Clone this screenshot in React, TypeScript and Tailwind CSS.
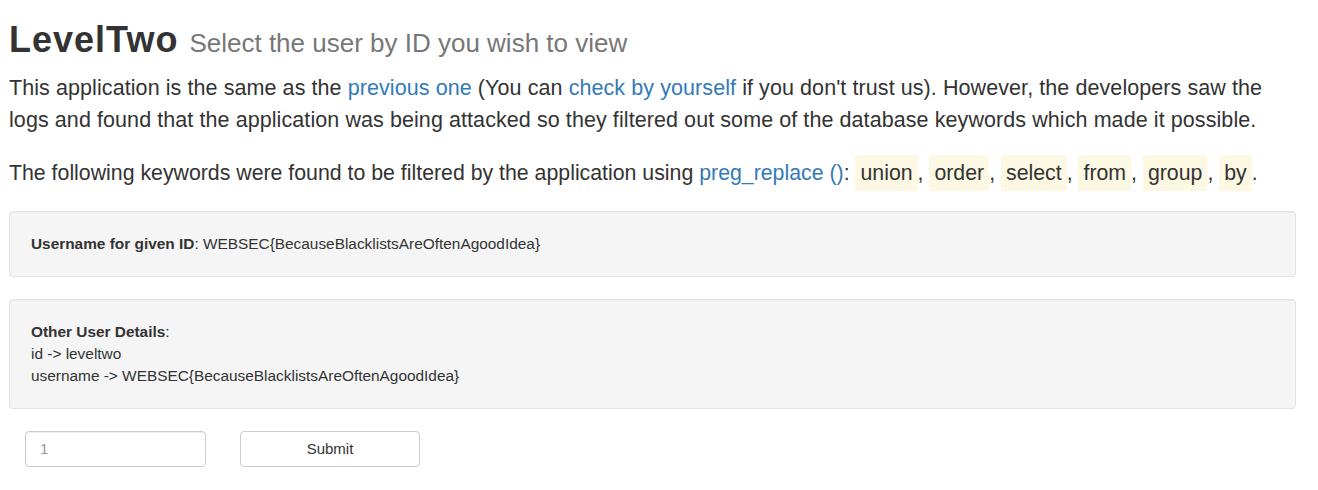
export default function App() {
  const keywords = ["union", "order", "select", "from", "group", "by"];
  return (
    <div className="min-h-screen bg-white pl-[9px] pr-[22px] pt-[20px] font-['Liberation_Sans',Arial,sans-serif] text-[#333]">
      <h1 className="mb-[12px] text-[36px] font-bold leading-[1.1] tracking-[1px] text-[#333]">
        LevelTwo{" "}
        <small className="text-[26px] font-normal tracking-normal text-[#777]">
          Select the user by ID you wish to view
        </small>
      </h1>

      <p className="mb-[17px] text-[21.5px] font-light leading-[32px] tracking-[0.08px]">
        This application is the same as the{" "}
        <a href="#" className="text-[#337ab7]">previous one</a> (You can{" "}
        <a href="#" className="text-[#337ab7]">check by yourself</a> if you don't trust us).
        However, the developers saw the logs and found that the application was being
        attacked so they filtered out some of the database keywords which made it possible.
      </p>

      <p className="mb-[18px] text-[21.3px] font-light leading-[40px]">
        The following keywords were found to be filtered by the application using{" "}
        <a href="#" className="text-[#337ab7]">preg_replace ()</a>:{" "}
        {keywords.map((k, i) => (
          <span key={k}>
            <mark className="bg-[#fcf8e3] px-[5px] py-[6px] text-[#333]">{k}</mark>
            {i < keywords.length - 1 ? ", " : "."}
          </span>
        ))}
      </p>

      <div className="mb-[22px] rounded-[4px] border border-[#e3e3e3] bg-[#f5f5f5] px-[21px] py-[21px] text-[15.4px] leading-[22px] shadow-[inset_0_1px_1px_rgba(0,0,0,0.05)]">
        <b>Username for given ID</b>: WEBSEC{"{"}BecauseBlacklistsAreOftenAgoodIdea{"}"}
      </div>

      <div className="mb-[22px] rounded-[4px] border border-[#e3e3e3] bg-[#f5f5f5] px-[21px] py-[21px] text-[15.4px] leading-[22px] shadow-[inset_0_1px_1px_rgba(0,0,0,0.05)]">
        <b>Other User Details</b>:
        <br />
        id -&gt; leveltwo
        <br />
        username -&gt; WEBSEC{"{"}BecauseBlacklistsAreOftenAgoodIdea{"}"}
      </div>

      <form className="flex items-center gap-[34px] pl-[16px]" onSubmit={(e) => e.preventDefault()}>
        <input
          type="text"
          placeholder="1"
          className="h-[36px] w-[181px] rounded-[4px] border border-[#ccc] px-[14px] text-[15px] text-[#555] placeholder:text-[#999] shadow-[inset_0_1px_1px_rgba(0,0,0,0.075)]"
        />
        <button
          type="submit"
          className="h-[36px] w-[180px] rounded-[4px] border border-[#ccc] bg-white pt-[1px] text-[15px] text-[#333]"
        >
          Submit
        </button>
      </form>
    </div>
  );
}
